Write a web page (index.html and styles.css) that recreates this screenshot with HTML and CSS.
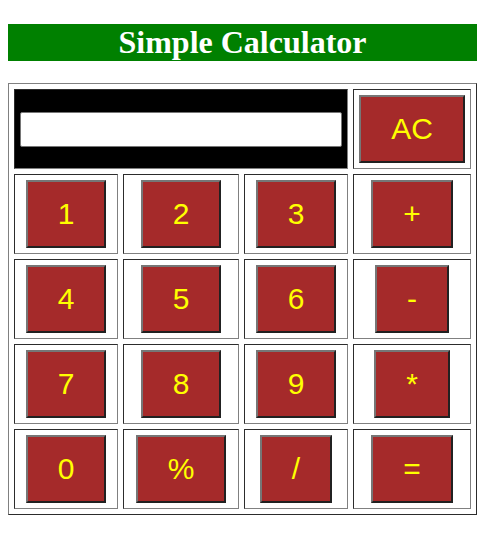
FILE: index.html
```html
<!DOCTYPE html>
<html>
<head>
<meta charset="utf-8">
<title>Simple Calculator</title>
<link rel="stylesheet" href="styles.css">
</head>
<body>
<div class="page">
  <h1 class="title">Simple Calculator</h1>
  <div class="calc">
    <div class="cell display-cell"><input class="display" type="text"></div>
    <div class="cell"><button class="key">AC</button></div>

    <div class="cell"><button class="key">1</button></div>
    <div class="cell"><button class="key">2</button></div>
    <div class="cell"><button class="key">3</button></div>
    <div class="cell"><button class="key">+</button></div>

    <div class="cell"><button class="key">4</button></div>
    <div class="cell"><button class="key">5</button></div>
    <div class="cell"><button class="key">6</button></div>
    <div class="cell"><button class="key">-</button></div>

    <div class="cell"><button class="key">7</button></div>
    <div class="cell"><button class="key">8</button></div>
    <div class="cell"><button class="key">9</button></div>
    <div class="cell"><button class="key">*</button></div>

    <div class="cell"><button class="key">0</button></div>
    <div class="cell"><button class="key">%</button></div>
    <div class="cell"><button class="key">/</button></div>
    <div class="cell"><button class="key">=</button></div>
  </div>
</div>
</body>
</html>
```
FILE: styles.css
```css
html, body {
  margin: 0;
  padding: 0;
  background: #ffffff;
}

body {
  padding: 24px 8px 8px 8px;
  font-family: "Liberation Serif", serif;
}

.page {
  width: 469px;
}

.title {
  margin: 0;
  background: #008000;
  color: #ffffff;
  font-family: "Liberation Serif", serif;
  font-weight: bold;
  font-size: 32px;
  line-height: 37px;
  height: 37px;
  text-align: center;
}

.calc {
  margin-top: 22px;
  border: 1px outset #808080;
  padding: 5px;
  display: grid;
  grid-template-columns: 104px 116px 104px 118px;
  grid-auto-rows: 80px;
  gap: 5px;
}

.cell {
  border: 1px inset #808080;
  display: flex;
  align-items: center;
  justify-content: center;
}

.display-cell {
  grid-column: span 3;
  background: #000000;
  padding: 0 5px;
  justify-content: flex-start;
}

.display {
  box-sizing: border-box;
  width: 322px;
  height: 35px;
  margin: 0;
  border: 1px solid #767676;
  border-radius: 2px;
  background: #ffffff;
  padding: 0 4px;
  font-size: 20px;
}

.key {
  box-sizing: border-box;
  height: 68px;
  padding: 0 30px 1px 30px;
  margin: 0;
  border: 2px outset #767676;
  border-radius: 0;
  background: #a52a2a;
  color: #ffff00;
  font-family: "Liberation Sans", Arial, sans-serif;
  font-size: 30px;
  line-height: 34px;
}
```
